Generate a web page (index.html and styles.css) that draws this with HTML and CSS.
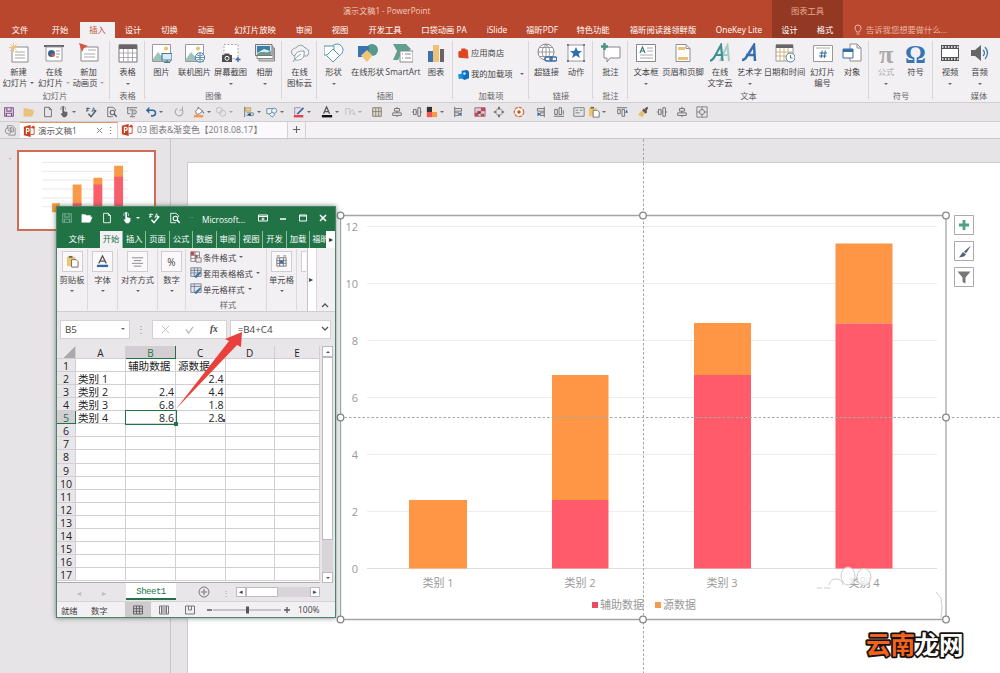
FILE: index.html
```html
<!DOCTYPE html>
<html lang="zh-CN">
<head>
<meta charset="utf-8">
<title>演示文稿1 - PowerPoint</title>
<link rel="stylesheet" href="styles.css">
</head>
<body>
<svg class="defs" aria-hidden="true">
  <symbol id="save" viewBox="0 0 14 14"><path d="M2 2h10v10H2zM4.500 2v4h5V2M4 12V8.500h6V12" fill="none" stroke="currentColor" stroke-width="1.300"/></symbol>
  <symbol id="folder" viewBox="0 0 14 14"><path d="M1 12V3h4l1 1h5v2M1 12l2.500-6H13l-2.500 6z" fill="currentColor" stroke="currentColor" stroke-width=".6"/></symbol>
  <symbol id="page" viewBox="0 0 14 14"><path d="M3 1.500h5.500L11 4v8.500H3zM8.500 1.500V4H11" fill="none" stroke="currentColor"/></symbol>
  <symbol id="touch" viewBox="0 0 14 14"><path d="M5 1.500a1 1 0 0 1 2 0V6l4 1v3.500L9 13H6L3 9l2-.5z" fill="currentColor"/><path d="M3.500 4.500a2.800 2.800 0 1 1 5 0" fill="none" stroke="currentColor" stroke-width=".8"/></symbol>
  <symbol id="spell" viewBox="0 0 14 14"><path d="M1 3h5M3.500 1.500 2 7M4.500 5l-3 0M8 7l2-5 2 5M9 5.500h2.500" fill="none" stroke="currentColor"/><path d="m4 9 3 3.500L13 5" fill="none" stroke="currentColor" stroke-width="1.700"/></symbol>
  <symbol id="preview" viewBox="0 0 14 14"><path d="M8 12.500H2v-11h6L11 4v2" fill="none" stroke="currentColor"/><circle cx="7.500" cy="7.500" r="2.600" fill="none" stroke="currentColor" stroke-width="1.200"/><path d="m9.500 9.500 3 3" stroke="currentColor" stroke-width="1.800"/></symbol>
  <symbol id="screen" viewBox="0 0 14 14"><path d="M1 2h12M2 2v7h3M4 4.500h4M7 9v3M4.500 12.500h6" fill="none" stroke="currentColor"/><circle cx="9.500" cy="7" r="2.500" fill="none" stroke="currentColor"/><path d="m9 6 1.500 1L9 8" fill="currentColor"/></symbol>
  <symbol id="undo" viewBox="0 0 14 14"><path d="M3 5h6a3 3 0 0 1 0 6.500H7" fill="none" stroke="currentColor" stroke-width="1.800"/><path d="M1 5l4-4v8z" fill="currentColor"/></symbol>
  <symbol id="redo" viewBox="0 0 14 14"><path d="M10.500 4A4.500 4.500 0 1 1 5 3M11 1v4H7.500" fill="none" stroke="currentColor" stroke-width="1.300"/></symbol>
  <symbol id="bucket" viewBox="0 0 14 14"><path d="m3 6 4-4 4 4-4 3.500H4zM6 3V1" fill="#fff" stroke="#666"/><path d="m10 4 3 4-1 1z" fill="#3d77b2"/><path d="M1 10.500h11v2.800H1z" fill="#f79646"/></symbol>
  <symbol id="rings" viewBox="0 0 14 14"><circle cx="5" cy="5" r="3.500" fill="none" stroke="#bbb"/><circle cx="9" cy="8.500" r="3.500" fill="none" stroke="#bbb"/></symbol>
  <symbol id="arrange" viewBox="0 0 14 14"><path d="M2 1v12" stroke="#666"/><path d="M3 2h6v4H3z" fill="#f0ce7b" stroke="#8c7a45" stroke-width=".6"/><path d="M4 8h8v3H4" fill="none" stroke="#5a8a8a"/><path d="m9 8-4 2 4 2z" fill="#347"/></symbol>
  <symbol id="shapes" viewBox="0 0 14 14"><path d="M1 3h8v6H1z" fill="#eef" stroke="#5a8b91"/><circle cx="9.500" cy="5.500" r="3" fill="#eef" stroke="#5a8b91"/><path d="m7 7 3.500 3L7 13 4 10z" fill="#eef" stroke="#5a8b91"/></symbol>
  <symbol id="pencil" viewBox="0 0 14 14"><path d="M2 2h7M2 2v8" fill="none" stroke="#88a"/><path d="m4 9 7.500-7.500 1.500 1.500L6 10z" fill="#3d6aa0"/><path d="M1 10.500h11v2.800H1z" fill="#e5404e"/></symbol>
  <symbol id="fontA" viewBox="0 0 14 14"><path d="m3 9 3.500-8L10 9M4.500 6.500h4" fill="none" stroke="#555" stroke-width="1.500"/><path d="M1 10.500h12v2.800H1z" fill="#111"/></symbol>
  <symbol id="shapeA" viewBox="0 0 14 14"><path d="M2 10V3h5v7M6 10l4-6 3 7M9 9h4" fill="none" stroke="#c2bec4"/></symbol>
  <symbol id="tile" viewBox="0 0 14 14"><path d="M2 2h10v10H2z" fill="#ddd5c8" stroke="#776"/><path d="M2 6.500h10M5.500 2v10M9 2v10" stroke="#776" stroke-width=".8"/></symbol>
  <symbol id="alignc" viewBox="0 0 14 14"><path d="M7 1v2M4 3h6v3H4zM7 6v2M2 8h10v3H2zM7 11v2" fill="none" stroke="#666"/></symbol>
  <symbol id="alignm" viewBox="0 0 14 14"><path d="M1 7h2M3 4h3v6H3zM6 7h2M8 2h3v10H8zM11 7h2" fill="none" stroke="#666"/></symbol>
  <symbol id="swatch" viewBox="0 0 14 14"><path d="M1 1h6v6H1z" fill="#333"/><path d="M7 1h6v6H7z" fill="#f6e2cf"/><path d="M1 7h6v6H1z" fill="#ef5555"/><path d="M7 7h6v6H7z" fill="#f39a4c"/></symbol>
  <symbol id="alignl" viewBox="0 0 14 14"><path d="M2 1v12M2 3h8v3H2M2 8h5v3H2" fill="none" stroke="#666"/><path d="m10 7-4 2.500 4 2.500z" fill="#3d6aa0"/></symbol>
  <symbol id="mosaic" viewBox="0 0 14 14"><path d="M1 2h12v10H1z" fill="#ddc9cb" stroke="#968"/><path d="M8 2h5v4H8zM1 8h4v4H1zM8 9h4v3H8z" fill="#c5485a"/><path d="M4 6h4v3H4z" fill="#664450"/></symbol>
  <symbol id="hexa" viewBox="0 0 14 14"><circle cx="7" cy="7" r="4" fill="none" stroke="#888"/><path d="M6 1h2v3H6zM1 6h3v2H1zM10 6h3v2h-3zM6 10h2v3H6z" fill="#666"/></symbol>
  <symbol id="target" viewBox="0 0 14 14"><circle cx="7" cy="7" r="5.500" fill="#fff4ec" stroke="#cf6b45" stroke-width="1.400" stroke-dasharray="4 1"/><circle cx="7" cy="7" r="2" fill="#b45c38"/></symbol>
  <symbol id="alignr" viewBox="0 0 14 14"><path d="M12 1v12M12 3H4v3h8M12 8H7v3h5" fill="none" stroke="#666"/><path d="m4 7 4 2.500L4 12z" fill="#3d6aa0"/></symbol>
  <symbol id="dist" viewBox="0 0 14 14"><path d="M1 12h12M2 4h3v6H2zM7 2h3v8H7zM12 5v5" fill="none" stroke="#666"/></symbol>
  <symbol id="disttop" viewBox="0 0 14 14"><path d="M1 2h12M2 4h3v5H2zM7 4h3v8H7z" fill="none" stroke="#666"/><path d="m10.500 8 2-4 1.500 4z" fill="#3d6aa0"/></symbol>
  <symbol id="txt" viewBox="0 0 14 14"><path d="M1 2h12v10H1zM3 5h3M3 8h5M8 5h3" fill="none" stroke="#677"/></symbol>
  <symbol id="paste" viewBox="0 0 14 14"><path d="M1 2h9v10H1z" fill="#edc56f"/><path d="M3 1h4v2H3z" fill="#666"/><path d="M6 5h5l2 2v6H6z" fill="#fff" stroke="#666"/></symbol>
  <symbol id="brush" viewBox="0 0 14 14"><path d="m1 10 5-5 3 4-3 4z" fill="#e7bf72"/><path d="m6 5 2-2 4 4-2 2zM9 3l3-2 1 1-2 4z" fill="#554"/></symbol>
  <symbol id="fit" viewBox="0 0 14 14"><path d="M1 1h12v12H1z" fill="none" stroke="#777"/><circle cx="7" cy="7" r="3" fill="none" stroke="#777"/><path d="M7 1v4M7 9v4M1 7h4M9 7h4" stroke="#777"/></symbol>
  <symbol id="ppt" viewBox="0 0 14 14"><path d="M1 2 9 0v14l-8-2z" fill="#c8401f"/><path d="M9 3h4v8H9" fill="#fff" stroke="#c8401f"/><circle cx="12" cy="2.500" r="1.500" fill="#c8401f"/><path d="M4 10.500V4h1.500a1.700 1.700 0 0 1 0 3.500H4" fill="none" stroke="#fff" stroke-width="1.300"/></symbol>
</svg>

<div class="app">
  <header class="titlebar">
    <div class="doc-title">演示文稿1 - PowerPoint</div>
    <div class="context-title">图表工具</div>
  </header>
  <nav class="tabs">
    <span>文件</span><span>开始</span><span class="active">插入</span><span>设计</span><span>切换</span><span>动画</span><span>幻灯片放映</span><span>审阅</span><span>视图</span><span>开发工具</span><span>口袋动画 PA</span><span>iSlide</span><span>福昕PDF</span><span>特色功能</span><span>福昕阅读器领鲜版</span><span>OneKey Lite</span><span class="ctx">设计</span><span class="ctx">格式</span>
    <span class="tell"><svg viewBox="0 0 8 12"><path d="M2.500 8C2.500 6.500 1 6 1 4a3 3 0 0 1 6 0c0 2-1.500 2.500-1.500 4zM2.500 10h3" fill="none" stroke="currentColor"/></svg>告诉我您想要做什么…</span>
  </nav>

  <section class="ribbon">
    <div class="group g-slides"><div class="btns">
      <div class="btn"><svg viewBox="0 0 20 20"><path d="M3 4h16v15H3z" fill="#fff" stroke="#8a8a8a"/><path d="M6 9h10M6 12h10M6 15h10" stroke="#a5a5a5"/><path d="M4.500 0v9M0 4.500h9M1.300 1.300l6.400 6.400M7.700 1.300 1.300 7.700" stroke="#edc478"/></svg><b>新建</b><b class="dd">幻灯片</b></div>
      <div class="btn"><svg viewBox="0 0 20 20"><path d="M0 3h20" stroke="#666" stroke-width="2"/><path d="M2 4h16v14H2z" fill="#fff" stroke="#999"/><circle cx="7.500" cy="10.500" r="3.500" fill="#2f6695"/><path d="M7.500 10.500v3.500A3.500 3.500 0 0 0 11 10.500z" fill="#db5b3a"/><path d="M12 8h4M12 11h4M12 14h3" stroke="#999"/></svg><b>在线</b><b class="dh">幻灯片</b></div>
      <div class="btn"><svg viewBox="0 0 20 20"><path d="M2 4h17v14H2z" fill="#fff" stroke="#888"/><path d="M9 7h8M5 11h11M5 14h11" stroke="#aaa"/><path d="m0 0 9 3-4 2-2 4z" fill="#d9533b"/></svg><b>新加</b><b class="dh">动画页</b></div>
    </div><h6>幻灯片</h6></div>
    <div class="group g-table"><div class="btns">
      <div class="btn"><svg viewBox="0 0 20 20"><path d="M1 2h18v17H1z" fill="#fff" stroke="#777"/><path d="M1 1.500h18V6H1z" fill="#666"/><path d="M1 10h18M1 14.500h18M5.500 6v13M10 6v13M14.500 6v13" stroke="#999" stroke-width=".8"/></svg><b>表格</b><i></i></div>
    </div><h6>表格</h6></div>
    <div class="group g-image"><div class="btns">
      <div class="btn"><svg viewBox="0 0 20 20"><path d="M.5 1.500h18v17H.5z" fill="#fff" stroke="#999"/><circle cx="14" cy="5.500" r="2" fill="#edc065"/><path d="m1 16 5-7 5 6v3H1z" fill="#9cc4ba"/><path d="M10 10.500h10v6.500H10zM15 17v2M12 19.500h6" fill="#d9ecf6" stroke="#497b9d" stroke-width="1.200"/></svg><b>图片</b></div>
      <div class="btn"><svg viewBox="0 0 20 20"><path d="M.5 1.500h18v17H.5z" fill="#fff" stroke="#999"/><circle cx="13" cy="5.500" r="2" fill="#edc065"/><path d="m1 16 5-7 5 6v3H1z" fill="#9cc4ba"/><circle cx="15" cy="14.500" r="4.700" fill="#fff" stroke="#3e7ba8"/><path d="M10.500 14.500h9M15 10v9M12 12q3 2 6 0M12 17q3-2 6 0" fill="none" stroke="#3e7ba8" stroke-width=".8"/></svg><b>联机图片</b></div>
      <div class="btn"><svg viewBox="0 0 20 20"><path d="M3 1.500h14v14H3z" fill="#fff" stroke="#aaa" stroke-dasharray="2 1.500"/><path d="M1 12h2l1-1.500h4L9 12h2v7H1z" fill="#4e4e4e"/><circle cx="6" cy="15.300" r="2" fill="none" stroke="#fff"/><path d="M17 14v5M14.500 16.500h5" stroke="#3b6ea1" stroke-width="1.400"/></svg><b>屏幕截图</b><i></i></div>
      <div class="btn"><svg viewBox="0 0 20 20"><path d="M4 5h15.500v13H4z" fill="#c7c7c7" stroke="#888"/><path d="M2 3.500h16v12H2z" fill="#fff" stroke="#888"/><path d="M.5 1.500H17v11H.5z" fill="#dceaf3" stroke="#777"/><path d="M2 3h13v5L9 6 2 10z" fill="#3d7ea8"/><path d="M2 11c5-4 8 0 14-3v4H2z" fill="#709b87"/></svg><b>相册</b><i></i></div>
    </div><h6>图像</h6></div>
    <div class="group g-cloud"><div class="btns">
      <div class="btn"><svg viewBox="0 0 20 20"><path d="M5 13a4 4 0 0 1-3-6c1-1 2-2 4-2a5 5 0 0 1 9 0c4 0 5 6 2 8h-5" fill="none" stroke="#8aa1a8"/><path d="M5 17c-2-8 5-9 9-9 1 6-2 10-9 9zm-2 2c2-4 5-6 8-8" fill="#fff" stroke="#8aa1a8"/></svg><b>在线</b><b>图标云</b></div>
    </div></div>
    <div class="group g-illus"><div class="btns">
      <div class="btn"><svg viewBox="0 0 20 20"><circle cx="13" cy="7" r="6" fill="#fff" stroke="#5c92ad"/><path d="M0 3h10v9H0z" fill="#fff" stroke="#5c92ad"/><path d="m9 6 6.500 6.500L9 19l-6.500-6.500z" fill="#fff" stroke="#5c92ad"/></svg><b>形状</b><i></i></div>
      <div class="btn"><svg viewBox="0 0 20 20"><circle cx="14" cy="7" r="6" fill="#55998c"/><path d="M0 3h11v11H0z" fill="#3974b0"/><path d="m9 7 5.500 5.500L9 19l-6-6.500z" fill="#f1c576"/></svg><b>在线形状</b></div>
      <div class="btn"><svg viewBox="0 0 20 20"><path d="M0 1h13l5 5-5 5H8l-3 6H0l4-9z" fill="#5f9f8e"/><path d="M7 8h13v11H7z" fill="#fff" stroke="#888"/><path d="M9 11h1M12 11h6M9 15h1M12 15h6" stroke="#888"/></svg><b>SmartArt</b></div>
      <div class="btn"><svg viewBox="0 0 20 20"><path d="M2 8h5v11H2z" fill="#3974b0"/><path d="M7 2h6v17H7z" fill="#edc276"/><path d="M14 6h4v13h-4z" fill="#666"/></svg><b>图表</b></div>
    </div><h6>插图</h6></div>
    <div class="group g-addins"><div class="addins">
      <p><svg viewBox="0 0 12 12"><path d="M1 4l9-2 1 9-10-1zM4 3V1h4v2" fill="#df4320" stroke="#df4320"/></svg>应用商店</p>
      <p class="more"><svg viewBox="0 0 12 12"><path d="M4 2l6-1 2 2v7l-5 2-3-2z" fill="#0f6fc0"/><path d="M0 6l5-1 1 5-5 1z" fill="#1690dd"/><circle cx="7" cy="5" r="1.500" fill="#b9ddf5"/></svg>我的加载项</p>
    </div><h6>加载项</h6></div>
    <div class="group g-links"><div class="btns">
      <div class="btn"><svg viewBox="0 0 20 20"><circle cx="9" cy="9" r="8" fill="#fff" stroke="#888"/><path d="M1 9h16M9 1v16M3 4.500h12M3 13.500h12M9 1q-8 8 0 16M9 1q8 8 0 16" fill="none" stroke="#888" stroke-width=".8"/><rect x="8" y="14" width="7" height="4" rx="2" fill="#fff" stroke="#386ea5" stroke-width="1.500"/><rect x="13" y="14" width="7" height="4" rx="2" fill="none" stroke="#386ea5" stroke-width="1.500"/></svg><b>超链接</b></div>
      <div class="btn"><svg viewBox="0 0 20 20"><path d="M2 2h16v16H2z" fill="#fff" stroke="#999"/><path d="M1 1h2v2H1zM17 1h2v2h-2zM1 17h2v2H1zM17 17h2v2h-2z" fill="#777"/><path d="m10 4 1.800 4h4.200l-3.300 2.700 1.200 4.300-3.900-2.500L6 15l1.300-4.300L4 8h4.200z" fill="#2f6fae"/></svg><b>动作</b></div>
    </div><h6>链接</h6></div>
    <div class="group g-note"><div class="btns">
      <div class="btn"><svg viewBox="0 0 20 20"><path d="M3 4h16v11H9l-3 4v-4H3z" fill="#fff" stroke="#888"/><path d="M3.500 0v7M0 3.500h7" stroke="#4a9282" stroke-width="2.500"/></svg><b>批注</b></div>
    </div><h6>批注</h6></div>
    <div class="group g-text"><div class="btns">
      <div class="btn"><svg viewBox="0 0 20 20"><path d="M.5 1.500h19v17H.5z" fill="#fff" stroke="#888"/><path d="m4 10 2.500-6L9 10M5 8h3" fill="none" stroke="#387c72" stroke-width="1.200"/><path d="M11 5h6M11 8h6M4 12h13M4 15h13" stroke="#aaa"/></svg><b>文本框</b><i></i></div>
      <div class="btn"><svg viewBox="0 0 20 20"><path d="M3 1.500h10l4 4v13H3z" fill="#fff" stroke="#8f8f8f"/><path d="M5 4h7v3H5zM5 14h10v3H5z" fill="#edc276"/><path d="M13 1.500v4h4" fill="none" stroke="#8f8f8f"/></svg><b>页眉和页脚</b></div>
      <div class="btn"><svg viewBox="0 0 20 20"><path d="M10 18 17.500 2 19 18M13 12h6" fill="none" stroke="#a8cec4" stroke-width="2"/><path d="M0 18q3-1 5-5l6-11 1.500 16M5 12h7" fill="none" stroke="#3f9190" stroke-width="2.200"/></svg><b>在线</b><b>文字云</b></div>
      <div class="btn"><svg viewBox="0 0 20 20"><path d="M2 17q3 0 5-4l7-11 1 16M6 12h9" fill="none" stroke="#356fae" stroke-width="2.500"/></svg><b>艺术字</b><i></i></div>
      <div class="btn"><svg viewBox="0 0 20 20"><path d="M1 2h17v16H1z" fill="#fff" stroke="#999"/><path d="M1 1.500h17V5H1z" fill="#666"/><path d="M1 9h17M1 13h17M5 5v13M9 5v13M13 5v13" stroke="#c9a45f" stroke-width=".8"/><circle cx="15.500" cy="14.500" r="4.500" fill="#fff" stroke="#4a7e9f"/><path d="M15.500 12v3h2" fill="none" stroke="#4a7e9f"/></svg><b>日期和时间</b></div>
      <div class="btn"><svg viewBox="0 0 20 20"><path d="M.5 2.500h19v16H.5z" fill="#fff" stroke="#999"/><path d="M3 5h14" stroke="#aaa"/><path d="M9.200 7.500 8.200 15M12.300 7.500l-1 7.500M6.500 10h7.500M6 13h7.500" stroke="#2f6498"/></svg><b>幻灯片</b><b>编号</b></div>
      <div class="btn"><svg viewBox="0 0 20 20"><path d="M8 1h7l4 4v13H8z" fill="#fff" stroke="#8c8c8c"/><path d="M15 1v4h4" fill="none" stroke="#8c8c8c"/><path d="M1 6h10v9H1z" fill="#fff" stroke="#386ea5"/><path d="M1 6h10v3H1z" fill="#386ea5"/></svg><b>对象</b></div>
    </div><h6>文本</h6></div>
    <div class="group g-symbol"><div class="btns">
      <div class="btn off"><span class="glyph">π</span><b>公式</b><i></i></div>
      <div class="btn"><span class="glyph blue">Ω</span><b>符号</b></div>
    </div><h6>符号</h6></div>
    <div class="group g-media"><div class="btns">
      <div class="btn"><svg viewBox="0 0 20 20"><path d="M1 2h18v16H1z" fill="#555"/><path d="M2 6h16v8H2z" fill="#fff"/><path d="M2 4h17M2 16h17" stroke="#fff" stroke-width="1.500" stroke-dasharray="1.500 1.500"/></svg><b>视频</b><i></i></div>
      <div class="btn"><svg viewBox="0 0 20 20"><path d="M1 7h4l6-5v16l-6-5H1z" fill="#666"/><path d="M13 7q3 3 0 6M15 4q5 6 0 12" fill="none" stroke="#3f7fa5" stroke-width="1.300"/></svg><b>音频</b><i></i></div>
      <div class="btn"><svg viewBox="0 0 20 20"><path d="M6 14v5M1 16h5" stroke="#3b6ea1" stroke-width="2"/></svg></div>
    </div><h6>媒体</h6></div>
  </section>

  <div class="qat">
    <span class="purple"><svg><use href="#save"/></svg></span>
    <span class="gold"><svg><use href="#folder"/></svg></span>
    <span><svg><use href="#page"/></svg></span>
    <span class="dd"><svg><use href="#touch"/></svg></span>
    <span class="slate"><svg><use href="#spell"/></svg></span>
    <span><svg><use href="#preview"/></svg></span>
    <span><svg><use href="#screen"/></svg></span>
    <span class="dd blue"><svg><use href="#undo"/></svg></span>
    <span class="off"><svg><use href="#redo"/></svg></span>
    <span class="dd"><svg><use href="#bucket"/></svg></span>
    <span class="dd off"><svg><use href="#rings"/></svg></span>
    <span class="dd"><svg><use href="#arrange"/></svg></span>
    <span class="dd"><svg><use href="#shapes"/></svg></span>
    <span class="dd"><svg><use href="#pencil"/></svg></span>
    <span class="dd"><svg><use href="#fontA"/></svg></span>
    <span class="dd off"><svg><use href="#shapeA"/></svg></span>
    <span><svg><use href="#tile"/></svg></span>
    <span><svg><use href="#alignc"/></svg></span>
    <span><svg><use href="#alignm"/></svg></span>
    <span class="dd"><svg><use href="#swatch"/></svg></span>
    <span><svg><use href="#alignl"/></svg></span>
    <span><svg><use href="#mosaic"/></svg></span>
    <span><svg><use href="#hexa"/></svg></span>
    <span><svg><use href="#target"/></svg></span>
    <span><svg><use href="#alignr"/></svg></span>
    <span><svg><use href="#dist"/></svg></span>
    <span><svg><use href="#txt"/></svg></span>
    <span class="dd"><svg><use href="#paste"/></svg></span>
    <span><svg><use href="#disttop"/></svg></span>
    <span><svg><use href="#brush"/></svg></span>
    <span><svg><use href="#alignm"/></svg></span>
    <span><svg><use href="#alignc"/></svg></span>
    <span><svg><use href="#fit"/></svg></span>
  </div>

  <div class="doctabs">
    <div class="recent"><svg viewBox="0 0 14 14"><path d="M4 2h6l3 3v8H5M4 2v3" fill="none" stroke="#888"/><circle cx="5" cy="8" r="3.500" fill="none" stroke="#888"/><path d="M5 6v2h2M8 4v5h3V5z" fill="none" stroke="#888"/></svg></div>
    <div class="doctab current"><svg><use href="#ppt"/></svg><span>演示文稿1</span><svg class="x" viewBox="0 0 8 8"><path d="m1 1 6 6M7 1 1 7" stroke="#777"/></svg><em>⋮</em></div>
    <div class="doctab"><svg><use href="#ppt"/></svg><span>03 图表&amp;渐变色【2018.08.17】</span></div>
    <div class="plus"><svg viewBox="0 0 10 10"><path d="M5 1v8M1 5h8" stroke="#666" stroke-width="1.200"/></svg></div>
  </div>

  <main class="workspace">
    <aside class="thumbs"><span class="mark">•</span>
      <div class="thumb"><svg viewBox="0 0 136 78">
        <path d="M23 10.500h87M23 19.500h87M23 28.500h87M23 37.500h87M23 46.500h87M23 55.500h87" stroke="#eee6e6"/>
        <path d="M33 52h8v9h-8zM54 33h9v20h-9zM75 26h9v8h-9zM96 14h9v12h-9z" fill="#f99a48"/><path d="M54 52h9v9h-9zM75 33h9v28h-9zM96 25h9v36h-9z" fill="#f95e6c"/>
      </svg></div>
    </aside>
    <section class="stage">
      <div class="slide">
        <svg class="chart" viewBox="188 163 812 510">
          <path d="M367 226.500h570M367 283.500h570M367 340.500h570M367 397.500h570M367 454.500h570M367 511.500h570" stroke="#ededed"/>
          <path d="M367 568.500h570" stroke="#dedede"/>
          <g fill="#ff9645"><path d="M409 500h58v68.500h-58zM552 375h56.500v125H552zM694 323h57v52h-57zM835.500 243.500h57v80h-57z"/></g>
          <g fill="#ff5b6b"><path d="M552 500h56.500v68.500H552zM694 375h57v193.500h-57zM835.500 323.500h57v245h-57z"/></g>
          <g class="axis" text-anchor="end"><text x="358" y="231">12</text><text x="358" y="288">10</text><text x="358" y="345">8</text><text x="358" y="402">6</text><text x="358" y="459">4</text><text x="358" y="516">2</text><text x="358" y="573">0</text></g>
          <g class="axis" text-anchor="middle"><text x="438" y="587">类别 1</text><text x="580" y="587">类别 2</text><text x="722" y="587">类别 3</text><text x="864" y="587">类别 4</text></g>
          <g class="axis"><text x="600" y="609">辅助数据</text><text x="663" y="609">源数据</text></g>
          <path d="M592 602h6v6h-6z" fill="#e84e62"/><path d="M655 602h6v6h-6z" fill="#f59a50"/>
          <path d="M840 588.500h44v4h-44z" fill="#fff"/>
          <g fill="#fff" fill-opacity=".72" stroke="#ccc"><ellipse cx="848" cy="576" rx="7" ry="9"/><ellipse cx="864" cy="577" rx="7" ry="8.500"/></g><path d="M829 585q1-6 7-6t7 6M817 588h5M824 588h6M936 592l5 6q2 8 0 20" fill="none" stroke="#ccc"/>
          <path d="M643.500 163v510M340 417.500h660" stroke="#a6a6a6" stroke-dasharray="2.500 2" fill="none"/>
          <path d="M340.500 215.500H946V619.500H340.500z" fill="none" stroke="#a5a5a5" stroke-width="1.300"/>
          <g fill="#fff" stroke="#888" stroke-width="1.300"><circle cx="340.500" cy="215.500" r="3.300"/><circle cx="643" cy="215.500" r="3.300"/><circle cx="946" cy="215.500" r="3.300"/><circle cx="340.500" cy="417.500" r="3.300"/><circle cx="946" cy="417.500" r="3.300"/><circle cx="340.500" cy="619.500" r="3.300"/><circle cx="643" cy="619.500" r="3.300"/><circle cx="946" cy="619.500" r="3.300"/></g>
          <g fill="#fff" stroke="#aaa"><path d="M954.500 215.500h19v19h-19zM954.500 241.500h19v19h-19zM954.500 267.500h19v19h-19z"/></g>
          <path d="M964 220v10M959 225h10" stroke="#4f9f82" stroke-width="2.800"/>
          <path d="M971 245.500l-7 6 2 2zM963 252l3 2.500-2 2-5 1z" fill="#51637c"/>
          <path d="M957.500 271.500h13l-5 6v6l-3-1.500v-4.500z" fill="#777"/>
          <g class="brandmark"><text x="866" y="653.500" fill="#f0641e">云南</text><text x="914.500" y="653.500" fill="#fff">龙网</text></g>
        </svg>
      </div>
    </section>
  </main>

  <section class="excel">
    <header class="xl-title">
      <span class="dim"><svg><use href="#save"/></svg></span><span><svg><use href="#folder"/></svg></span><span><svg><use href="#page"/></svg></span><span class="dd"><svg><use href="#touch"/></svg></span><span><svg><use href="#spell"/></svg></span><span><svg><use href="#preview"/></svg></span><span class="dim">··</span><strong>Microsoft...</strong>
      <span><svg viewBox="0 0 12 12"><path d="M1.500 3h9v6h-9zM1.500 4.500h9" fill="none" stroke="#fff"/><path d="M6 5.500v3M4.500 7h3" stroke="#fff"/></svg></span><span><svg viewBox="0 0 12 12"><path d="M3 7h6" stroke="#fff" stroke-width="1.500"/></svg></span><span><svg viewBox="0 0 12 12"><path d="M2.500 3h7v6h-7zM2.500 4h7" fill="none" stroke="#fff"/></svg></span><span><svg viewBox="0 0 12 12"><path d="m3 3 6 6M9 3 3 9" stroke="#fff" stroke-width="1.600"/></svg></span>
    </header>
    <nav class="xl-tabs"><span class="file">文件</span><span class="on">开始</span><span>插入</span><span>页面</span><span>公式</span><span>数据</span><span>审阅</span><span>视图</span><span>开发</span><span>加载</span><span class="cut">福昕</span><span class="next">▸</span></nav>
    <div class="xl-ribbon">
      <div class="xb"><div class="box"><svg viewBox="0 0 14 14"><use href="#paste"/></svg></div><b>剪贴板</b><i></i></div>
      <div class="xb"><div class="box"><svg viewBox="0 0 14 14"><path d="m3 9 4-8 4 8M4.500 6.500h5" fill="none" stroke="#555" stroke-width="1.400"/><path d="M1 10.500h12v2.500H1z" fill="#31699c"/></svg></div><b>字体</b><i></i></div>
      <div class="xb"><div class="box"><svg viewBox="0 0 14 14"><path d="M1 3h12M3 6h8M1 9h12M3 12h8" stroke="#888"/></svg></div><b>对齐方式</b><i></i></div>
      <div class="xb"><div class="box">%</div><b>数字</b><i></i></div>
      <div class="styles">
        <p><svg viewBox="0 0 14 14"><path d="M1 1h10v11H1zM1 5h10M1 8.500h10M6 1v11" fill="#fff" stroke="#777"/><path d="M1 1h4v4H1zM6 5h3v3H6z" fill="#bd4b55"/><path d="M7 8h6v5H7z" fill="#eee" stroke="#777"/></svg>条件格式</p>
        <p><svg viewBox="0 0 14 14"><path d="M1 1h12v10H1zM1 4h12M1 7h12M5 1v10M9 1v10" fill="#dce9f3" stroke="#778"/><path d="m5 11 7-6 1 2-6 6z" fill="#3e74a5"/></svg>套用表格格式</p>
        <p><svg viewBox="0 0 14 14"><path d="M1 1h12v10H1zM1 4h12M5 1v10" fill="#dce9f3" stroke="#778"/><path d="m5 11 7-6 1 2-6 6z" fill="#3e74a5"/></svg>单元格样式</p>
        <h6>样式</h6>
      </div>
      <div class="xb"><div class="box"><svg viewBox="0 0 14 14"><path d="M2 3h10v9H2zM2 6h10M2 9h10M5 3v9M9 3v9M2 1h3M9 1h3" fill="none" stroke="#777"/><path d="M5 6h4v3H5z" fill="#3e74a5"/></svg></div><b>单元格</b><i></i></div>
      <div class="clip"></div>
      <div class="scroller">▸</div>
      <div class="collapse"><svg viewBox="0 0 8 6"><path d="m1 5 3-3 3 3" fill="none" stroke="#555" stroke-width="1.300"/></svg></div>
    </div>
    <div class="formula"><div class="namebox"><span>B5</span><i></i></div><em>⋮</em><div class="fx"><svg viewBox="0 0 10 10"><path d="m1 1 8 8M9 1 1 9" stroke="#bbb"/></svg><svg viewBox="0 0 10 10"><path d="m1 5 3 4 5-7" fill="none" stroke="#bbb" stroke-width="1.500"/></svg><q>fx</q></div><div class="input"><span>=B4+C4</span><svg viewBox="0 0 8 6"><path d="m1 1 3 3 3-3" fill="none" stroke="#555" stroke-width="1.300"/></svg></div></div>
    <div class="sheet-area">
      <div class="sheet">
        <u class="corner"></u><u>A</u><u class="sel">B</u><u>C</u><u>D</u><u>E</u>
        <u>1</u><s></s><s>辅助数据</s><s>源数据</s><s></s><s></s>
        <u>2</u><s>类别 1</s><s></s><s class="n">2.4</s><s></s><s></s>
        <u>3</u><s>类别 2</s><s class="n">2.4</s><s class="n">4.4</s><s></s><s></s>
        <u>4</u><s>类别 3</s><s class="n">6.8</s><s class="n">1.8</s><s></s><s></s>
        <u class="sel">5</u><s>类别 4</s><s class="n pick">8.6</s><s class="n end">2.8</s><s></s><s></s>
        <u>6</u><s></s><s></s><s></s><s></s><s></s>
        <u>7</u><s></s><s></s><s></s><s></s><s></s>
        <u>8</u><s></s><s></s><s></s><s></s><s></s>
        <u>9</u><s></s><s></s><s></s><s></s><s></s>
        <u>10</u><s></s><s></s><s></s><s></s><s></s>
        <u>11</u><s></s><s></s><s></s><s></s><s></s>
        <u>12</u><s></s><s></s><s></s><s></s><s></s>
        <u>13</u><s></s><s></s><s></s><s></s><s></s>
        <u>14</u><s></s><s></s><s></s><s></s><s></s>
        <u>15</u><s></s><s></s><s></s><s></s><s></s>
        <u>16</u><s></s><s></s><s></s><s></s><s></s>
        <u>17</u><s></s><s></s><s></s><s></s><s></s>
      </div>
      <div class="vscroll"><span class="up"></span><span class="thumb-v"></span><span class="down"></span></div>
    </div>
    <div class="sheetbar"><div class="arrows"><span>◂</span><span>▸</span></div><div class="sheettab">Sheet1</div><svg class="add" viewBox="0 0 12 12"><circle cx="6" cy="6" r="5" fill="none" stroke="#777"/><path d="M6 3v6M3 6h6" stroke="#777"/></svg><em>⋮</em><div class="hscroll"><span>◂</span><span class="thumb-h"></span><span class="right">▸</span></div></div>
    <footer class="status"><span>就绪</span><span>数字</span>
      <div class="view on"><svg viewBox="0 0 12 12"><path d="M1.500 2h9v8h-9zM1.500 4.700h9M1.500 7.300h9M4.500 2v8M7.500 2v8" fill="none" stroke="#666"/></svg></div>
      <div class="view"><svg viewBox="0 0 12 12"><path d="M1.500 2h9v8h-9zM3.500 2v8M8.500 2v8M4 4h4M4 6h4M4 8h4" fill="none" stroke="#777"/></svg></div>
      <div class="view"><svg viewBox="0 0 12 12"><path d="M1.500 2h9v8h-9zM4.500 2v4h3V2" fill="none" stroke="#777"/></svg></div>
      <svg class="zoombar" viewBox="0 0 84 12"><path d="M1 6h5M78 6h6M81 3v6" stroke="#555" stroke-width="1.300"/><path d="M7 6h68" stroke="#999"/><path d="M40 2.500h3v7h-3z" fill="#555"/></svg><span class="pct">100%</span></footer>
    <svg class="pointer" viewBox="0 0 72 84"><path d="M1 81 54 13l-4-2 17-7-1 15-4-2z" fill="#e8403d"/></svg>
  </section>
</div>
</body>
</html>
```
FILE: styles.css
```css
* { box-sizing: border-box; }
body { margin: 0; font-family: "Open Sans", "Noto Sans CJK SC", sans-serif; font-size: 8.3px; color: #444; }
b, h6, p, em, u, s, i, q { font-weight: 400; font-style: normal; text-decoration: none; margin: 0; quotes: none; }
svg { display: block; flex: none; }
.defs { position: absolute; width: 0; height: 0; }
.app { position: relative; display: flex; flex-direction: column; width: 1000px; height: 673px; overflow: hidden; background: #e7e4e8; }

/* title and tabs */
.titlebar { display: flex; height: 22px; background: #b9472d; color: #f0cdbf; line-height: 22px; }
.doc-title { width: 772px; padding-left: 343px; font-size: 8.100px; white-space: nowrap; }
.context-title { width: 71px; background: #933923; text-align: center; color: #e6a68f; }
.tabs { display: grid; grid-template-columns: 40px 40px 35px 36px 37px 36px 62px 36px 36px 54px 64px 42px 48px 54px 86px 66px 35px 36px 1fr; height: 16px; background: #b9472d; color: #fff; line-height: 16px; text-align: center; white-space: nowrap; }
.tabs .active { background: #f3f0f4; color: #c0513a; }
.tabs .ctx { background: #933923; }
.tabs .tell { display: flex; align-items: center; gap: 4px; padding-left: 11px; color: #eab3a3; }
.tell svg { width: 8px; height: 12px; }

/* ribbon */
.ribbon { display: flex; height: 65px; background: #f3f0f4; border-bottom: 1px solid #d2ced3; overflow: hidden; }
.group { display: flex; flex: none; flex-direction: column; justify-content: space-between; position: relative; padding: 5px 0 1px; }
.group::after { content: ""; position: absolute; right: 0; top: 3px; bottom: 3px; width: 1px; background: #d9d5da; }
.group h6, .styles h6 { font-size: 8.3px; line-height: 11px; text-align: center; color: #666; }
.btns { display: grid; height: 46px; }
.btn { display: flex; flex-direction: column; align-items: center; white-space: nowrap; }
.btn svg { width: 20px; height: 20px; margin-bottom: 4px; }
.btn b { line-height: 10.7px; }
.btn.off { color: #aaa; }
.btn i, .xb i, .namebox i, .dd::after, .dh::after, .more::after, .styles p::after { content: ""; width: 0; height: 0; border: 2px solid transparent; border-top-color: #666; border-bottom: 0; }
.btn i { margin-top: 5px; }
.btn .dd::after, .btn .dh::after { display: inline-block; margin-left: 3px; vertical-align: 2px; }
.btn .dh::after { border-top-color: #aaa; }
.glyph { height: 24px; font: 700 26px/24px "Liberation Serif", serif; color: #aaa; }
.glyph.blue { color: #3575b2; }
.g-slides { width: 110px; } .g-slides .btns { grid-template-columns: 37px 34px 35px; }
.g-table { width: 35px; }
.g-image { width: 137px; } .g-image .btns { grid-template-columns: 33px 33px 39px 29px; }
.g-cloud { width: 35px; }
.g-illus { width: 136px; } .g-illus .btns { grid-template-columns: 33px 35px 36px 30px; }
.g-addins { width: 76px; }
.g-links { width: 64px; } .g-links .btns { grid-template-columns: 35px 24px; }
.g-note { width: 35px; }
.g-text { width: 241px; } .g-text .btns { grid-template-columns: 36px 38px 36px 23px 47px 29px 30px; }
.g-symbol { width: 64px; } .g-symbol .btns { grid-template-columns: 34px 25px; }
.g-media { width: 92px; } .g-media .btns { grid-template-columns: 34px 25px 33px; }
.addins { display: flex; flex-direction: column; gap: 9px; padding: 4px 0 0 5px; }
.addins p { display: flex; align-items: center; gap: 2px; height: 12px; line-height: 12px; white-space: nowrap; }
.addins svg { width: 11px; height: 11px; }
.more::after { margin-left: 5px; }

/* quick access toolbar */
.qat { display: grid; align-items: center; height: 18px; padding-left: 3px; grid-template-columns: 19.500px 19.500px 16px 27px 21px 20px 19px 28px 20px 22px 28px 23px 27px 28px 23px 27px 20px 20px 15px 27px 21px 19px 20px 21px 19px 20px 15px 28px 21px 19px 20px 20px 20px; background: #e9e6ea; }
.qat span { display: flex; align-items: center; color: #666; }
.qat svg { width: 12px; height: 12px; }
.qat .dd::after { margin-left: 2px; }
.qat .purple { color: #80538f; } .qat .gold { color: #e8c37d; } .qat .slate { color: #4a5d72; } .qat .blue { color: #31699f; } .qat .off { color: #aaa; }
.qat .off::after { opacity: .5; }

/* document tabs */
.doctabs { display: flex; height: 18px; background: #f5f2f6; border-top: 1px solid #d0ccd1; border-bottom: 1px solid #c9c5ca; line-height: 16px; }
.recent { width: 20px; padding: 2px 4px; background: #e9e6ea; } .recent svg { width: 12px; height: 12px; }
.doctab { display: flex; align-items: center; gap: 4px; width: 170px; padding: 0 3px; background: #fbf9fb; border-right: 1px solid #d5d1d6; color: #777; font-size: 8.800px; white-space: nowrap; }
.doctab svg { width: 12px; height: 12px; }
.doctab.current { width: 98px; background: #fff; border-top: 1px solid #df9968; color: #555; font-size: 8.500px; gap: 3px; }
.doctab .x { width: 7px; height: 7px; margin-left: auto; }
.doctab em { width: 8px; text-align: center; }
.plus { width: 18px; padding: 3px 4px; border-right: 1px solid #d5d1d6; } .plus svg { width: 9px; height: 9px; }

/* workspace */
.workspace { display: flex; flex: 1; }
.thumbs { display: flex; align-items: flex-start; width: 171px; padding: 11px 0 0 9px; border-right: 1px solid #c9c5ca; }
.mark { width: 8px; color: #c77; font-size: 6px; line-height: 18px; }
.thumb { width: 139px; height: 81px; border: 2px solid #cf6c53; background: #fff; }
.thumb svg { width: 135px; height: 77px; }
.stage { flex: 1; padding: 24px 0 0 17px; background: repeating-linear-gradient(#a9a5aa 0 2.500px, transparent 2.500px 4.500px) 472px 0 / 1px 24px no-repeat; }
.slide { width: 812px; height: 510px; background: #fff; outline: 1px solid #cfcbd0; }
.chart { width: 812px; height: 510px; }
.axis { fill: #999; font-size: 11px; }
.brandmark { font: 700 24.500px "Noto Sans CJK SC", sans-serif; stroke: #17100d; stroke-width: 3.500px; stroke-linejoin: round; paint-order: stroke; }

/* workbook window */
.excel { position: absolute; left: 56px; top: 206px; width: 279.500px; height: 412px; display: flex; flex-direction: column; background: #e9e6ea; border: 1px solid #4d8368; box-shadow: 0 0 5px rgba(40, 70, 60, .65); }
.xl-title { display: grid; grid-template-columns: 20px 20px 20px 27px 21px 20px 13px 55px 20px 20px 20px 20px; align-items: center; height: 24px; padding: 0 0 3px 4px; background: #217346; color: #fff; }
.xl-title span { display: flex; align-items: center; } .xl-title svg { width: 12px; height: 12px; }
.xl-title .dim { color: #6daa88; } .xl-title .dd::after { margin-left: 3px; border-top-color: #fff; }
.xl-title strong { font-weight: 400; font-size: 8.300px; padding-top: 4px; }
.xl-tabs { display: flex; height: 17px; background: #217346; color: #fff; line-height: 16px; text-align: center; overflow: hidden; }
.xl-tabs span { flex: none; width: 23.400px; border-right: 1px solid #8dbb9f; white-space: nowrap; }
.xl-tabs .file { width: 43px; padding-right: 3px; border: 0; } .xl-tabs .on { width: 23px; background: #f3f0f4; color: #217346; }
.xl-tabs .cut { width: 16px; padding-left: 2px; overflow: hidden; border: 0; text-align: left; } .xl-tabs .next { width: 9.500px; border: 0; background: #fff; color: #333; }
.xl-ribbon { display: grid; grid-template-columns: 31px 30px 40px 28px 81px 30px 10px 10px 17px; height: 64px; background: #f3f0f4; border-bottom: 1px solid #d0ccd1; }
.xb { display: flex; flex-direction: column; align-items: center; margin: 1px 0; padding-top: 2px; border-right: 1px solid #dcd8dd; white-space: nowrap; }
.box { display: grid; place-items: center; width: 21px; height: 21px; margin-bottom: 2px; border: 1px solid #d0ccd1; background: #faf8fa; font-size: 10px; } .box svg { width: 13px; height: 13px; }
.xb b { line-height: 12px; } .xb i { margin-top: 4px; }
.styles { padding: 3px 0 0 4px; border-right: 1px solid #dcd8dd; }
.styles p { display: flex; align-items: center; gap: 1px; height: 15.700px; padding-bottom: 3px; white-space: nowrap; } .styles svg { width: 12px; height: 12px; } .styles p::after { margin-left: 2px; } .styles h6 { margin-top: 1px; }
.clip { width: 5px; height: 21px; margin: 3px 0 0 4px; border: 1px solid #d0ccd1; border-right: 0; background: #fff; }
.scroller { padding: 25px 0 0 1px; border-left: 1px solid #c7c3c8; border-right: 1px solid #dcd8dd; background: #fff; line-height: 12px; }
.collapse { align-self: end; padding: 0 0 3px 4px; } .collapse svg { width: 8px; height: 6px; }
.formula { display: flex; align-items: center; height: 34px; padding: 0 4px 0 3px; font-size: 9.800px; }
.formula > div { display: flex; align-items: center; height: 19px; border: 1px solid #d4d0d5; background: #fff; }
.formula em { width: 22px; text-align: center; color: #999; }
.namebox { justify-content: space-between; width: 70px; padding: 0 4px; }
.fx { justify-content: space-around; width: 75px; } .fx svg { width: 9px; height: 9px; } .fx q { font: italic 700 9.500px "Liberation Serif", serif; }
.formula .input { justify-content: space-between; width: 101px; margin-left: 3px; padding: 0 1px 0 7px; } .input svg { width: 8px; height: 6px; }
.sheet-area { display: flex; height: 237px; }
.sheet { display: grid; flex: none; width: 263px; grid-template-columns: 19px 50px 50px 49.500px 49.500px 45px; grid-template-rows: 13px; grid-auto-rows: 13.070px; background: #fff; color: #222; font-size: 10.600px; line-height: 14px; overflow: hidden; border-bottom: 1px solid #aaa; }
.sheet u, .sheet s { border-right: 1px solid #d2ced3; border-bottom: 1px solid #d2ced3; white-space: nowrap; }
.sheet u { background: #e9e6ea; text-align: center; font-size: 10px; line-height: 14px; }
.sheet u:nth-child(6n+1) { font-size: 10.600px; }
.sheet s { position: relative; padding-left: 2px; }
.sheet .corner { background: linear-gradient(135deg, #e9e6ea 62%, #aaa 63%); }
.sheet .sel { background: #d2ced3; color: #217346; border-color: #217346; }
.sheet .n { padding: 0 1px 0 0; text-align: right; }
.sheet .pick { outline: 1.500px solid #217346; outline-offset: 0; z-index: 1; }
.pick::after { content: ""; position: absolute; right: -3px; bottom: -3px; width: 4px; height: 4px; background: #217346; }
.end::after { content: ""; position: absolute; right: 0; bottom: 1px; width: 2px; height: 3px; background: #357; }
.vscroll { display: flex; flex-direction: column; width: 11px; margin-left: 2px; background: #d8d4d9; }
.vscroll span { display: grid; place-items: center; flex: none; height: 11px; border: 1px solid #bdb9be; background: #fff; }
.vscroll .thumb-v { height: 183px; } .vscroll .down { margin-top: auto; }
.up::after, .down::after { content: ""; border: 2px solid transparent; border-bottom-color: #555; border-top: 0; } .down::after { transform: rotate(180deg); }
.sheetbar { display: flex; align-items: center; height: 18px; }
.arrows { display: flex; justify-content: space-around; width: 69px; padding: 0 10px; color: #bbb; }
.sheettab { align-self: flex-start; width: 50px; height: 17px; background: #fff; border-bottom: 2px solid #217346; color: #217346; text-align: center; font: 9px/19px "Liberation Mono", monospace; letter-spacing: -.5px; }
.add { width: 12px; height: 12px; margin-left: 22px; } .sheetbar em { width: 26px; text-align: center; color: #999; padding-left: 6px; }
.hscroll { display: flex; width: 84px; height: 10px; background: #d8d4d9; line-height: 8px; font-size: 7px; }
.hscroll span { width: 10px; border: 1px solid #bdb9be; background: #fff; text-align: center; } .hscroll .thumb-h { width: 32px; } .hscroll .right { margin-left: auto; }
.status { display: flex; align-items: center; flex: 1; background: #f3f0f4; border-top: 1px solid #d6d2d7; }
.status > span { width: 30px; padding-left: 4px; } .view { display: grid; place-items: center; width: 26px; height: 100%; } .status .view:nth-of-type(1) { margin-left: 8px; }
.view.on { background: #cecace; } .view svg { width: 12px; height: 12px; }
.zoombar { width: 84px; height: 12px; margin-left: 3px; } .status .pct { margin-left: 8px; padding: 0; font-size: 8.500px; }
.pointer { position: absolute; left: 118px; top: 121px; width: 72px; height: 84px; }
```
